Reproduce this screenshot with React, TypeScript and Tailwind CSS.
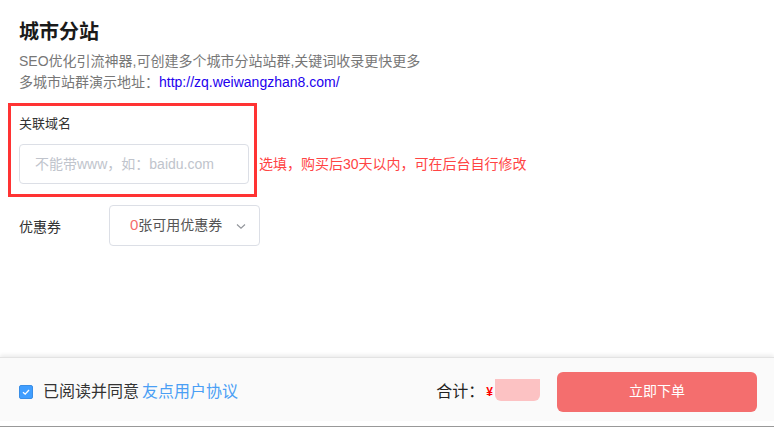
const font = "font-['Liberation_Sans','Noto_Sans_CJK_SC',sans-serif]";

const ChevronDown = () => (
  <svg width="12" height="12" viewBox="0 0 12 12" fill="none">
    <path d="M2 4.5 L6 8.2 L10 4.5" stroke="#909399" strokeWidth="1.1" />
  </svg>
);

const CheckBox = () => (
  <span className="w-[14px] h-[14px] rounded-[2px] bg-[#409eff] border border-[#3a8ee6] flex items-center justify-center">
    <svg width="10" height="10" viewBox="0 0 10 10" fill="none">
      <path d="M2 5.2 L4.2 7.2 L8 3" stroke="#fff" strokeWidth="1.3" />
    </svg>
  </span>
);

export default function App() {
  return (
    <div className={`w-[774px] h-[427px] bg-white flex flex-col ${font}`}>
      <div className="flex-1 pl-[19px] pt-[18px]">
        <h1 className="text-[20px] leading-[28px] font-bold text-[#1a1a1a]">城市分站</h1>
        <div className="mt-[5px] text-[14px] leading-[21px] text-[#777]">
          <p>SEO优化引流神器,可创建多个城市分站站群,关键词收录更快更多</p>
          <p>
            多城市站群演示地址：<a href="#" className="text-[#2200ee]">http://zq.weiwangzhan8.com/</a>
          </p>
        </div>

        <div className="mt-[10px] flex items-center">
          <div className="-ml-[11px] w-[249px] border-[3px] border-[#f33] pl-[8px] pt-[8px] pb-[10px]">
            <div className="text-[13px] leading-[20px] text-[#333]">关联域名</div>
            <div className="mt-[10px] w-[230px] h-[40px] border border-[#dcdfe6] rounded-[4px] flex items-center pl-[15px] text-[14px] text-[#c0c4cc]">
              不能带www，如：baidu.com
            </div>
          </div>
          <span className="ml-[2px] mt-[28px] text-[14px] text-[#f44]">选填，购买后30天以内，可在后台自行修改</span>
        </div>

        <div className="mt-[8px] flex items-center">
          <span className="w-[90px] text-[14px] text-[#333] mt-[3px]">优惠券</span>
          <div className="w-[151px] h-[41px] border border-[#dcdfe6] rounded-[4px] flex items-center pl-[20px] pr-[12px] text-[14px] text-[#555]">
            <span className="text-[#f56c6c] text-[15px]">0</span>
            <span>张可用优惠券</span>
            <span className="ml-auto"><ChevronDown /></span>
          </div>
        </div>
      </div>

      <div className="h-[64px] bg-[#fafafa] border-t border-[#e3e3e3] shadow-[0_-2px_4px_rgba(0,0,0,0.08)] flex items-center pt-[4px] pl-[19px] pr-[17px]">
        <CheckBox />
        <span className="ml-[10px] text-[16px] text-[#333]">已阅读并同意</span>
        <span className="ml-[3px] text-[16px] text-[#4a9ff5]">友点用户协议</span>
        <span className="ml-auto text-[16px] text-[#222]">合计：</span>
        <span className="ml-[2px] text-[12px] font-bold text-[#f00]">¥</span>
        <span className="ml-[2px] w-[45px] h-[22px] bg-[#fcc2c3] rounded-b-[6px] mt-[-3px]" />
        <button className="ml-[17px] w-[200px] h-[40px] rounded-[6px] bg-[#f46e6e] text-white text-[14px]">立即下单</button>
      </div>
      <div className="h-[6px] bg-white border-b border-[#999]" />
    </div>
  );
}
